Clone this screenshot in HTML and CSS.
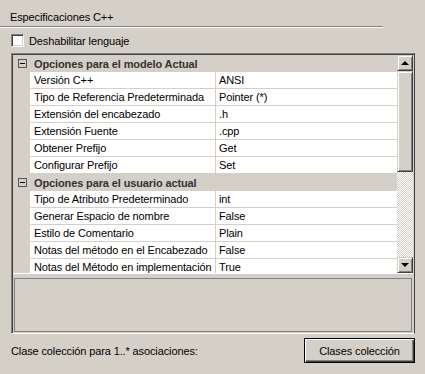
FILE: index.html
```html
<!DOCTYPE html>
<html>
<head>
    <link rel="stylesheet" href="styles.css">
</head>
<body>
<div class="panel">
    <div class="panel-title">Especificaciones C++</div>
    <div class="separator"></div>

    <label class="check-row">
        <span class="checkbox"></span>
        <span>Deshabilitar lenguaje</span>
    </label>

    <div class="grid-frame">
        <div class="grid-list">
            <div class="grid-rows">
                <div class="category"><span class="toggle"></span>Opciones para el modelo Actual</div>
                <div class="prop"><span class="prop-name">Versión C++</span><span class="prop-value">ANSI</span></div>
                <div class="prop"><span class="prop-name">Tipo de Referencia Predeterminada</span><span class="prop-value">Pointer (*)</span></div>
                <div class="prop"><span class="prop-name">Extensión del encabezado</span><span class="prop-value">.h</span></div>
                <div class="prop"><span class="prop-name">Extensión Fuente</span><span class="prop-value">.cpp</span></div>
                <div class="prop"><span class="prop-name">Obtener Prefijo</span><span class="prop-value">Get</span></div>
                <div class="prop"><span class="prop-name">Configurar Prefijo</span><span class="prop-value">Set</span></div>
                <div class="category"><span class="toggle"></span>Opciones para el usuario actual</div>
                <div class="prop"><span class="prop-name">Tipo de Atributo Predeterminado</span><span class="prop-value">int</span></div>
                <div class="prop"><span class="prop-name">Generar Espacio de nombre</span><span class="prop-value">False</span></div>
                <div class="prop"><span class="prop-name">Estilo de Comentario</span><span class="prop-value">Plain</span></div>
                <div class="prop"><span class="prop-name">Notas del método en el Encabezado</span><span class="prop-value">False</span></div>
                <div class="prop"><span class="prop-name">Notas del Método en implementación</span><span class="prop-value">True</span></div>
            </div>
            <div class="scrollbar">
                <div class="scroll-btn"><span class="arrow-up"></span></div>
                <div class="scroll-thumb"></div>
                <div class="scroll-track"></div>
                <div class="scroll-btn"><span class="arrow-down"></span></div>
            </div>
        </div>
        <div class="grid-help"></div>
    </div>

    <div class="footer">
        <span>Clase colección para 1..* asociaciones:</span>
        <button class="win-button">Clases colección</button>
    </div>
</div>
</body>
</html>
```

FILE: styles.css
```css
* {
    margin: 0;
    padding: 0;
    box-sizing: border-box;
}

body {
    background: #d4d0c8;
    font-family: "Liberation Sans", Arial, sans-serif;
    font-size: 11px;
    letter-spacing: -0.12px;
    color: #000;
    width: 425px;
    height: 374px;
    overflow: hidden;
}

.panel-title {
    padding: 11px 0 0 10px;
    height: 26px;
    line-height: 12px;
}

.separator {
    width: 383px;
    border-top: 1px solid #808080;
    border-bottom: 1px solid #fff;
}

.check-row {
    display: flex;
    align-items: center;
    gap: 5px;
    margin: 6px 0 0 11px;
    height: 13px;
}

.checkbox {
    width: 13px;
    height: 13px;
    background: #fff;
    border-top: 1px solid #808080;
    border-left: 1px solid #808080;
    border-right: 1px solid #fff;
    border-bottom: 1px solid #fff;
    box-shadow: inset 1px 1px #404040, inset -1px -1px #d4d0c8;
}

/* property grid */
.grid-frame {
    margin: 6px 0 0 11px;
    width: 404px;
    height: 281px;
    border-top: 1px solid #808080;
    border-left: 1px solid #808080;
    border-right: 1px solid #404040;
    border-bottom: 1px solid #fff;
    box-shadow: inset 1px 1px #404040, inset -1px -1px #d4d0c8;
    padding: 1px;
    display: flex;
    flex-direction: column;
}

.grid-list {
    display: flex;
    height: 219px;
    border-bottom: 1px solid #fff;
}

.grid-rows {
    width: 384px;
    overflow: hidden;
}

.category {
    height: 17px;
    display: flex;
    align-items: center;
    background: #d4d0c8;
    font-weight: bold;
    color: #333;
    padding-left: 5px;
}

.toggle {
    width: 9px;
    height: 9px;
    border: 1px solid #555;
    margin-right: 7px;
    position: relative;
}

.toggle::after {
    content: "";
    position: absolute;
    left: 1px;
    top: 3px;
    width: 5px;
    height: 1px;
    background: #000;
}

.prop {
    height: 17px;
    display: flex;
    margin-left: 17px;
    background: #fff;
    border-bottom: 1px solid #d4d0c8;
}

.prop-name {
    width: 186px;
    padding-left: 4px;
    line-height: 16px;
    border-right: 1px solid #d4d0c8;
    white-space: nowrap;
    overflow: hidden;
}

.prop-value {
    flex: 1;
    padding-left: 3px;
    line-height: 16px;
}

/* scrollbar */
.scrollbar {
    width: 16px;
    display: flex;
    flex-direction: column;
}

.scroll-btn,
.scroll-thumb {
    background: #d4d0c8;
    border-top: 1px solid #d4d0c8;
    border-left: 1px solid #d4d0c8;
    border-right: 1px solid #404040;
    border-bottom: 1px solid #404040;
    box-shadow: inset 1px 1px #fff, inset -1px -1px #808080;
}

.scroll-btn {
    height: 16px;
    display: flex;
    align-items: center;
    justify-content: center;
}

.scroll-thumb {
    height: 101px;
}

.scroll-track {
    flex: 1;
    background: repeating-conic-gradient(#fff 0 25%, #d4d0c8 0 50%) 0 0 / 2px 2px;
}

.arrow-up,
.arrow-down {
    width: 0;
    height: 0;
    border-left: 4px solid transparent;
    border-right: 4px solid transparent;
}

.arrow-up {
    border-bottom: 4px solid #000;
}

.arrow-down {
    border-top: 4px solid #000;
}

.grid-help {
    margin: 4px 0 0 1px;
    width: 398px;
    height: 54px;
    border: 1px solid #808080;
}

/* footer */
.footer {
    display: flex;
    align-items: center;
    justify-content: space-between;
    width: 415px;
    padding-left: 11px;
    margin-top: 4px;
}

.win-button {
    width: 111px;
    height: 25px;
    font-family: inherit;
    font-size: 11px;
    letter-spacing: inherit;
    color: #000;
    background: #d4d0c8;
    border: 1px solid #000;
    box-shadow: inset 1px 1px #fff, inset -1px -1px #404040, inset -2px -2px #808080;
}
```
